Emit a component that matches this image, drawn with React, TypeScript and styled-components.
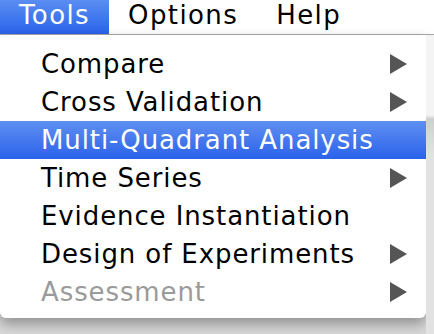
import React from "react";
import styled, { createGlobalStyle, css } from "styled-components";

const GlobalStyle = createGlobalStyle`
  html, body {
    margin: 0;
    padding: 0;
    width: 434px;
    height: 334px;
    overflow: hidden;
    background: #e6e6e6;
  }
`;

type Item = {
  label: string;
  submenu?: boolean;
  selected?: boolean;
  disabled?: boolean;
};

const items: Item[] = [
  { label: "Compare", submenu: true },
  { label: "Cross Validation", submenu: true },
  { label: "Multi-Quadrant Analysis", selected: true },
  { label: "Time Series", submenu: true },
  { label: "Evidence Instantiation" },
  { label: "Design of Experiments", submenu: true },
  { label: "Assessment", submenu: true, disabled: true },
];

const App: React.FC = () => {
  return (
    <Screen>
      <GlobalStyle />
      <MenuBar>
        <MenuTitle $active>Tools</MenuTitle>
        <MenuTitle>Options</MenuTitle>
        <MenuTitle>Help</MenuTitle>
      </MenuBar>
      <Body>
        <MenuPanel>
          {items.map((item) => (
            <MenuItem
              key={item.label}
              $selected={item.selected}
              $disabled={item.disabled}
            >
              <span>{item.label}</span>
              {item.submenu && <Arrow />}
            </MenuItem>
          ))}
        </MenuPanel>
        <Backdrop />
      </Body>
    </Screen>
  );
};

export default App;

const Screen = styled.div`
  width: 434px;
  height: 334px;
  display: flex;
  flex-direction: column;
  font-family: "DejaVu Sans", "Liberation Sans", sans-serif;
  background: linear-gradient(#ececec, #d9d9d9);
`;

const MenuBar = styled.div`
  height: 34px;
  display: flex;
  align-items: stretch;
  background: #fff;
  border-bottom: 1px solid #a9a9a9;
  flex-shrink: 0;
`;

const MenuTitle = styled.div<{ $active?: boolean }>`
  display: flex;
  align-items: center;
  padding: 0 19px 4px;
  font-size: 26px;
  letter-spacing: 1.4px;
  color: #000;
  ${({ $active }) =>
    $active &&
    css`
      color: #fff;
      background: linear-gradient(#5b8ef2, #2a63ea);
    `}
`;

const Body = styled.div`
  flex: 1;
  display: flex;
`;

const MenuPanel = styled.div`
  width: 426px;
  height: 283px;
  box-sizing: border-box;
  padding: 10px 0 0;
  background: #fff;
  border-radius: 0 0 6px 6px;
  box-shadow: 0 6px 14px rgba(0, 0, 0, 0.35);
  display: flex;
  flex-direction: column;
`;

const MenuItem = styled.div<{ $selected?: boolean; $disabled?: boolean }>`
  height: 38px;
  display: flex;
  align-items: center;
  justify-content: space-between;
  padding: 0 19px 0 41px;
  font-size: 26px;
  letter-spacing: 0.9px;
  color: ${({ $disabled }) => ($disabled ? "#9a9a9a" : "#000")};
  ${({ $selected }) =>
    $selected &&
    css`
      color: #fff;
      background: linear-gradient(#5f8ff2, #2b62ea);
    `}
`;

const Arrow = styled.span`
  width: 0;
  height: 0;
  border-top: 10px solid transparent;
  border-bottom: 10px solid transparent;
  border-left: 17px solid #555;
`;

const Backdrop = styled.div`
  flex: 1;
  background: linear-gradient(#f4f4f4 0, #f4f4f4 80px, #cfcfcf 84px, #e2e2e2 120px);
`;
